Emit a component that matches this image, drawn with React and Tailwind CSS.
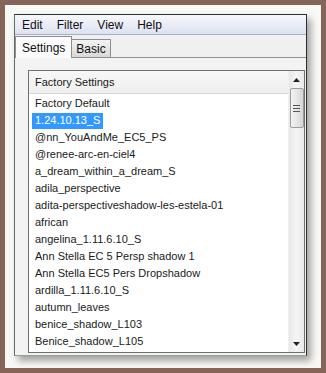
const items = [
  "Factory Default",
  "1.24.10.13_S",
  "@nn_YouAndMe_EC5_PS",
  "@renee-arc-en-ciel4",
  "a_dream_within_a_dream_S",
  "adila_perspective",
  "adita-perspectiveshadow-les-estela-01",
  "african",
  "angelina_1.11.6.10_S",
  "Ann Stella EC 5 Persp shadow 1",
  "Ann Stella EC5 Pers Dropshadow",
  "ardilla_1.11.6.10_S",
  "autumn_leaves",
  "benice_shadow_L103",
  "Benice_shadow_L105",
];

export default function App() {
  return (
    <div className="w-[326px] h-[373px] bg-[#866457] p-[5px] flex" style={{ fontFamily: '"Liberation Sans", Arial, sans-serif' }}>
      <div className="flex-1 bg-[#f8f8f6] pl-[9px] pt-[9px] pr-[14px] pb-[12px] flex">
        <div className="flex-1 flex flex-col border border-[#2e2e2e] border-b-[#9a9a9a] border-l-[#6a6a6a] bg-[#f0f0f0] shadow-[4px_5px_7px_rgba(0,0,0,0.35)]">
          {/* menu bar */}
          <div className="h-[20px] flex items-center gap-[14px] pl-[7px] text-[12px] text-[#111] bg-gradient-to-b from-[#f7f8fc] to-[#dde2f2] border-b border-[#a9afc0]">
            <span>Edit</span>
            <span>Filter</span>
            <span>View</span>
            <span>Help</span>
          </div>
          {/* tabs */}
          <div className="flex items-end h-[23px] border-b border-[#8e8e8e]">
            <div className="h-[22px] px-[6px] -mb-px flex items-center text-[12px] text-[#111] bg-[#fbfbfb] border border-b-0 border-[#8e8e8e] z-10">
              Settings
            </div>
            <div className="h-[18px] px-[4px] flex items-center text-[12px] text-[#111] bg-gradient-to-b from-[#f3f3f3] to-[#d9d9d9] border border-b-0 border-l-0 border-[#8e8e8e]">
              Basic
            </div>
          </div>
          {/* panel */}
          <div className="flex-1 pl-[13px] pt-[12px] pr-[1px] pb-[2px] flex bg-[#f3f3f3]">
            <div className="flex-1 flex border border-[#6f6f6f] bg-white overflow-hidden">
              <div className="flex-1 flex flex-col">
                <div className="h-[23px] flex items-center pl-[6px] text-[11px] text-[#1a1a1a] bg-gradient-to-b from-[#f7f7f7] to-[#efefef] border-b border-[#d5d5d5]">
                  Factory Settings
                </div>
                <div className="flex flex-col pt-[1px]">
                  {items.map((t, i) => (
                    <div key={t} className="h-[17px] flex items-center pl-[3px] text-[11px] whitespace-nowrap">
                      <span className={i === 1 ? "bg-[#3399ff] text-white px-[3px] h-[16px] flex items-center" : "px-[3px] text-[#1a1a1a]"}>
                        {t}
                      </span>
                    </div>
                  ))}
                </div>
              </div>
              {/* scrollbar */}
              <div className="w-[16px] flex flex-col items-center bg-gradient-to-r from-[#e8e8e8] via-[#f5f5f5] to-[#e8e8e8] border-l border-[#f0f0f0]">
                <div className="h-[17px] w-full flex items-center justify-center">
                  <svg width="7" height="4" viewBox="0 0 7 4"><path d="M0 4 L3.5 0 L7 4 Z" fill="#222" /></svg>
                </div>
                <div className="w-[14px] h-[40px] rounded-[2px] border border-[#9c9c9c] bg-gradient-to-r from-[#f3f3f3] via-[#e6e6e6] to-[#d4d4d4] flex flex-col items-center justify-center gap-[2px]">
                  <div className="w-[7px] h-px bg-[#555]" />
                  <div className="w-[7px] h-px bg-[#555]" />
                  <div className="w-[7px] h-px bg-[#555]" />
                </div>
                <div className="flex-1" />
                <div className="h-[17px] w-full flex items-center justify-center">
                  <svg width="7" height="4" viewBox="0 0 7 4"><path d="M0 0 L7 0 L3.5 4 Z" fill="#222" /></svg>
                </div>
              </div>
            </div>
          </div>
        </div>
      </div>
    </div>
  );
}
